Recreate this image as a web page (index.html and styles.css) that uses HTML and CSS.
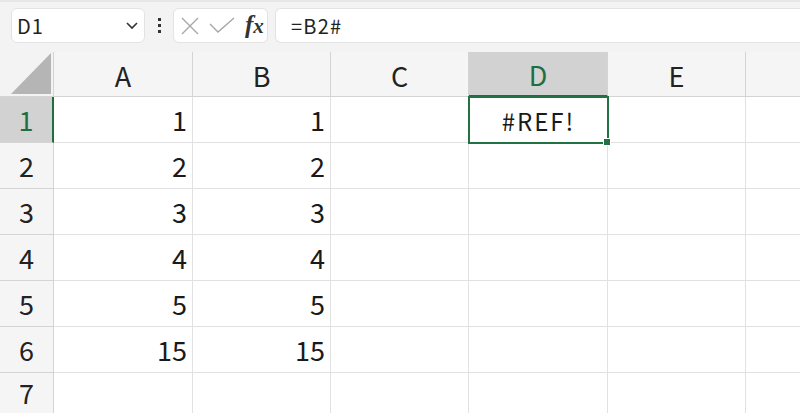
FILE: index.html
```html
<!DOCTYPE html>
<html>
<head>
<meta charset="utf-8">
<link rel="stylesheet" href="styles.css">
</head>
<body>
<div class="app">
  <div class="toolbar">
    <div class="namebox">
      <span class="name">D1</span>
      <svg class="chev" width="14" height="10" viewBox="0 0 14 10"><path d="M2 2 L7 7 L12 2" fill="none" stroke="#333" stroke-width="1.6"/></svg>
    </div>
    <div class="dots"><span></span><span></span><span></span></div>
    <div class="fxbox">
      <svg width="20" height="20" viewBox="0 0 20 20"><path d="M2 2 L18 18 M18 2 L2 18" stroke="#a6a6a6" stroke-width="1.3" fill="none"/></svg>
      <svg width="26" height="18" viewBox="0 0 26 18"><path d="M1 7 L9 15 L25 1" stroke="#a6a6a6" stroke-width="1.3" fill="none"/></svg>
      <span class="fx"><i>f</i><i class="x">x</i></span>
    </div>
    <div class="formula">=B2#</div>
  </div>
  <div class="grid">
    <div class="corner"><div class="tri"></div></div>
    <div class="colhead">A</div>
    <div class="colhead">B</div>
    <div class="colhead">C</div>
    <div class="colhead sel">D</div>
    <div class="colhead">E</div>
    <div class="colhead last"></div>

    <div class="rowhead sel">1</div>
    <div class="cell num">1</div><div class="cell num">1</div><div class="cell"></div>
    <div class="cell active">#REF!<span class="handle"></span></div><div class="cell"></div><div class="cell last"></div>

    <div class="rowhead">2</div>
    <div class="cell num">2</div><div class="cell num">2</div><div class="cell"></div><div class="cell"></div><div class="cell"></div><div class="cell last"></div>

    <div class="rowhead">3</div>
    <div class="cell num">3</div><div class="cell num">3</div><div class="cell"></div><div class="cell"></div><div class="cell"></div><div class="cell last"></div>

    <div class="rowhead">4</div>
    <div class="cell num">4</div><div class="cell num">4</div><div class="cell"></div><div class="cell"></div><div class="cell"></div><div class="cell last"></div>

    <div class="rowhead">5</div>
    <div class="cell num">5</div><div class="cell num">5</div><div class="cell"></div><div class="cell"></div><div class="cell"></div><div class="cell last"></div>

    <div class="rowhead">6</div>
    <div class="cell num">15</div><div class="cell num">15</div><div class="cell"></div><div class="cell"></div><div class="cell"></div><div class="cell last"></div>

    <div class="rowhead r7">7</div>
    <div class="cell"></div><div class="cell"></div><div class="cell"></div><div class="cell"></div><div class="cell"></div><div class="cell last"></div>
  </div>
</div>
</body>
</html>
```
FILE: styles.css
```css
* { box-sizing: border-box; }
html, body { margin: 0; padding: 0; }
body {
  width: 800px;
  height: 413px;
  overflow: hidden;
  background: #ffffff;
  font-family: "Noto Sans CJK JP", "Noto Sans", sans-serif;
  color: #1a1a1a;
}
.app { width: 800px; height: 413px; overflow: hidden; }

.toolbar {
  height: 52px;
  background: #f3f3f3;
  border-top: 2px solid #e6e6e6;
  display: flex;
  align-items: flex-start;
  padding: 6px 0 0 11px;
}
.namebox {
  width: 134px;
  height: 35px;
  background: #fff;
  border: 1px solid #e3e3e3;
  border-radius: 6px;
  display: flex;
  align-items: center;
  justify-content: space-between;
  padding: 0 4px 0 5px;
}
.name { font-size: 20px; color: #222; line-height: 1; letter-spacing: 1px; }
.chev { margin-right: 1px; }
.dots {
  width: 28px;
  height: 35px;
  display: flex;
  flex-direction: column;
  align-items: center;
  justify-content: center;
  gap: 3px;
}
.dots span { width: 3px; height: 3px; background: #333; display: block; }
.fxbox {
  width: 95px;
  height: 35px;
  background: #fff;
  border: 1px solid #e3e3e3;
  border-radius: 6px;
  display: flex;
  align-items: center;
  padding: 0 0 0 6px;
  gap: 9px;
}
.fx {
  font-family: "Liberation Serif", "DejaVu Serif", serif;
  font-size: 25px;
  font-weight: bold;
  color: #333;
  margin-left: 1px;
  line-height: 1;
  margin-top: -3px;
}
.fx i { font-style: italic; }
.fx .x { font-size: 21px; }
.formula {
  margin-left: 7px;
  flex: 1;
  height: 35px;
  background: #fff;
  border: 1px solid #e3e3e3;
  border-right: none;
  border-radius: 6px 0 0 6px;
  font-size: 20px;
  letter-spacing: 1.2px;
  color: #222;
  padding-left: 15px;
  display: flex;
  align-items: center;
  line-height: 1;
}

.grid {
  display: grid;
  grid-template-columns: 54px 139px 138px 138px 139px 138px 54px;
  grid-template-rows: 45px repeat(7, 46px);
}
.corner {
  background: #f3f3f3;
  border-right: 1px solid #d4d4d4;
  border-bottom: 1px solid #d4d4d4;
  position: relative;
}
.tri {
  position: absolute;
  right: 2px;
  bottom: 2px;
  width: 40px;
  height: 41px;
  background: #b5b5b5;
  clip-path: polygon(100% 0, 100% 100%, 0 100%);
}
.colhead {
  background: #f5f5f5;
  border-right: 1px solid #d4d4d4;
  border-bottom: 1px solid #d4d4d4;
  display: flex;
  align-items: center;
  justify-content: center;
  font-size: 27px;
  color: #222;
  line-height: 1;
  padding-top: 2px;
}
.colhead.sel {
  background: #d2d2d2;
  color: #1e6e42;
  border-bottom: 2px solid #1e6e42;
}
.colhead.last { border-right: none; }
.rowhead {
  background: #f5f5f5;
  border-right: 1px solid #d4d4d4;
  border-bottom: 1px solid #d4d4d4;
  display: flex;
  align-items: center;
  justify-content: center;
  font-size: 27px;
  color: #222;
  line-height: 1;
}
.rowhead.r7 { align-items: flex-start; padding-top: 6px; }
.rowhead.sel {
  background: #d2d2d2;
  color: #1e6e42;
  border-right: 2px solid #1e6e42;
}
.cell {
  background: #fff;
  border-right: 1px solid #e1e1e1;
  border-bottom: 1px solid #e1e1e1;
  display: flex;
  align-items: center;
  font-size: 27px;
  line-height: 1;
  color: #1a1a1a;
}
.cell.last { border-right: none; }
.cell.num { justify-content: flex-end; padding-right: 5px; }
.cell.active {
  position: relative;
  justify-content: center;
  font-size: 24px;
  letter-spacing: 2px;
  border: 2px solid #217346;
  margin: -1px 0 0 -1px;
  width: 141px;
  height: 48px;
  padding-top: 1px;
}
.handle {
  position: absolute;
  right: -4px;
  bottom: -4px;
  width: 6px;
  height: 6px;
  background: #217346;
  border: 1px solid #fff;
  box-sizing: content-box;
}
```
